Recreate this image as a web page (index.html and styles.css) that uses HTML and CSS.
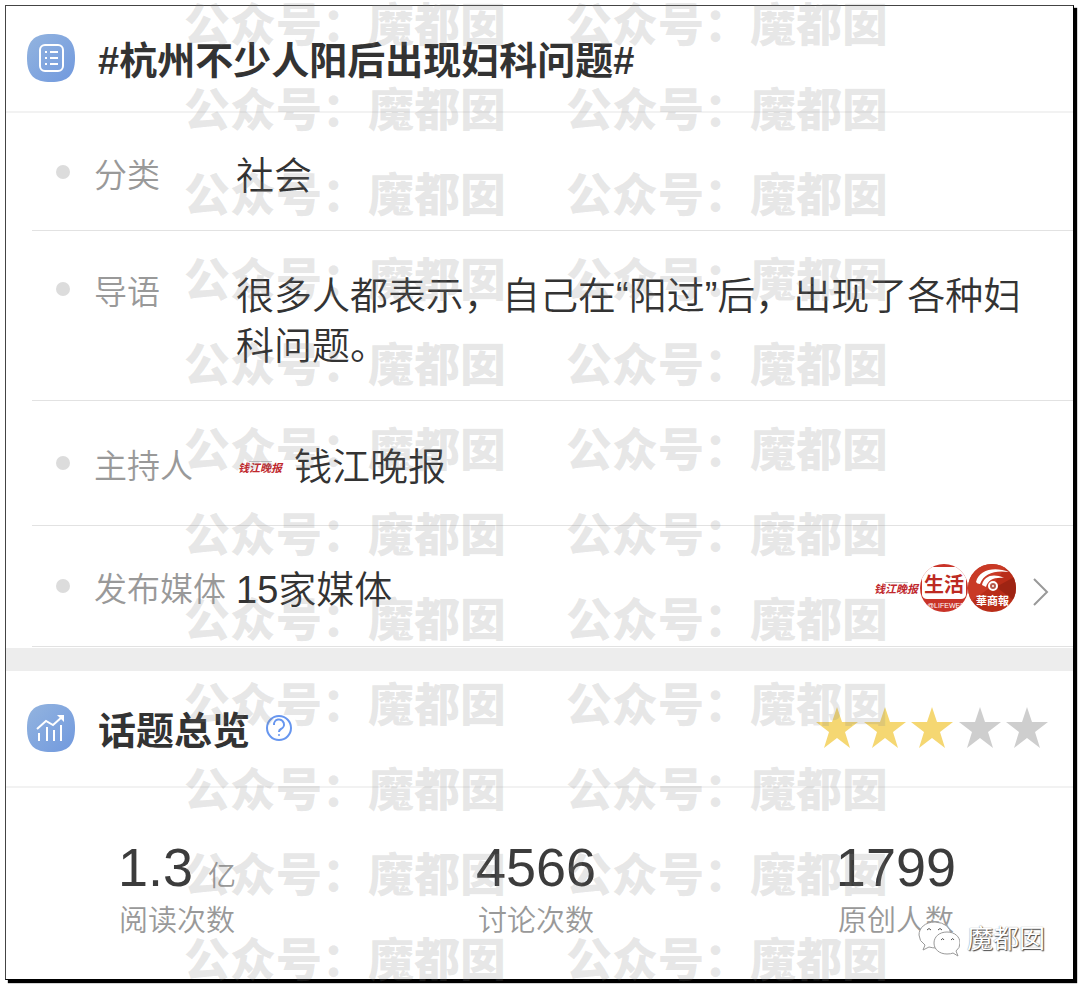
FILE: index.html
```html
<!DOCTYPE html>
<html lang="zh-CN">
<head>
    <meta charset="utf-8">
    <meta name="viewport" content="width=device-width, initial-scale=1">
    <title>话题详情</title>
    <link rel="stylesheet" href="styles.css">
</head>
<body>
    <main class="card">
        <header class="card-header">
            <svg class="header-icon" viewBox="0 0 48 48" aria-hidden="true">
                <defs>
                    <linearGradient id="blue" x1="0" y1="0" x2="1" y2="1">
                        <stop offset="0" stop-color="#93b4df"/>
                        <stop offset="1" stop-color="#7199de"/>
                    </linearGradient>
                </defs>
                <path fill="url(#blue)" d="M24 0C41 0 48 7 48 24S41 48 24 48 0 41 0 24 7 0 24 0Z"/>
                <rect x="13" y="11" width="23" height="26" rx="5" fill="none" stroke="#fff" stroke-width="2"/>
                <path stroke="#fff" stroke-width="2" d="M18 18h2m3 0h8M18 24h2m3 0h8M18 30h2m3 0h8"/>
            </svg>
            <h1>#杭州不少人阳后出现妇科问题#</h1>
        </header>

        <dl class="info">
            <div class="row">
                <dt>分类</dt>
                <dd>社会</dd>
            </div>
            <div class="row row-intro">
                <dt>导语</dt>
                <dd>很多人都表示，自己在“阳过”后，出现了各种妇科问题。</dd>
            </div>
            <div class="row row-host">
                <dt>主持人</dt>
                <dd>
                    <svg class="paper-logo" viewBox="0 0 48 48" aria-hidden="true">
                        <path stroke="#c4c4c4" d="M13 18.500h23"/>
                        <text x="2" y="29">钱江晚报</text>
                    </svg>
                    钱江晚报
                </dd>
            </div>
            <div class="row row-media">
                <dt>发布媒体</dt>
                <dd>15家媒体</dd>
                <dd class="media-list">
                    <a href="#media" aria-label="查看全部媒体">
                        <svg class="paper-logo" viewBox="0 0 48 48" aria-hidden="true">
                            <path stroke="#c4c4c4" d="M13 18.500h23"/>
                            <text x="2" y="29">钱江晚报</text>
                        </svg>
                        <svg class="avatar" viewBox="0 0 48 48" aria-hidden="true">
                            <clipPath id="round"><circle cx="24" cy="24" r="24"/></clipPath>
                            <g clip-path="url(#round)">
                                <path fill="#c93328" d="M0 0h48v48H0z"/>
                                <path fill="#fff" d="M2 6Q3 3 7 3h34q4 0 5 3v25q-1 4-5 4H7q-4 0-5-4Z"/>
                                <text class="life-name" x="4" y="28">生活</text>
                                <text class="life-web" x="7" y="44">@LIFEWEEK</text>
                            </g>
                        </svg>
                        <svg class="avatar" viewBox="0 0 48 48" aria-hidden="true">
                            <g clip-path="url(#round)">
                                <path fill="#b92d19" d="M0 0h48v48H0z"/>
                                <path fill="#c93a26" d="M0 0h40L24 22 0 40Z"/>
                                <path fill="#9e2413" d="M28 23 48 12v26Z"/>
                                <path fill="#fff" d="M8 18C11 6 26 2 41 8 27 6 16 9 12 20Q9 20 8 18Z"/>
                                <path fill="#fff" d="M14 21C16 12 25 9 36 14 26 13 20 16 18 23Z"/>
                                <circle cx="25" cy="22" r="4" fill="#b55b4e" stroke="#fff" stroke-width="2"/>
                                <circle cx="25" cy="22" r="1" fill="#fff"/>
                                <text class="huashang" x="8" y="41">華商報</text>
                            </g>
                        </svg>
                        <svg class="chevron" viewBox="0 0 16 28" aria-hidden="true">
                            <path fill="none" stroke="#999" stroke-width="2" d="M1 1l13 13L1 27"/>
                        </svg>
                    </a>
                </dd>
            </div>
        </dl>

        <section class="overview">
            <header class="card-header overview-header">
                <svg class="header-icon" viewBox="0 0 48 48" aria-hidden="true">
                    <path fill="url(#blue)" d="M24 0C41 0 48 7 48 24S41 48 24 48 0 41 0 24 7 0 24 0Z"/>
                    <path fill="none" stroke="#fff" stroke-width="2" d="M12 37v-8M20 37V23M27 37V26M34 37V21"/>
                    <path fill="none" stroke="#fff" stroke-width="2" d="M10 25l9-8 7 4 9-8"/>
                    <path fill="#fff" d="M30 11h7v7Z"/>
                </svg>
                <h2>话题总览</h2>
                <button type="button" class="help" aria-label="说明">
                    <svg viewBox="0 0 26 26" aria-hidden="true">
                        <circle cx="13" cy="13" r="12" fill="none" stroke="#6796ef" stroke-width="2"/>
                        <path fill="none" stroke="#6796ef" stroke-width="2" d="M8 10a5 5 0 1 1 7 4q-2 1-2 3"/>
                        <circle cx="13" cy="20" r="1" fill="#6796ef"/>
                    </svg>
                </button>
                <svg class="stars" viewBox="0 0 234 44" role="img" aria-label="三星，满分五星">
                    <defs>
                        <path id="star" d="M22 1l5 15h16L30 26l5 16-13-10L9 42l5-16L1 16h16Z"/>
                    </defs>
                    <g fill="#f5d772">
                        <use href="#star"/>
                        <use href="#star" x="48"/>
                        <use href="#star" x="95"/>
                    </g>
                    <g fill="#cecece">
                        <use href="#star" x="143"/>
                        <use href="#star" x="190"/>
                    </g>
                </svg>
            </header>
            <ul class="stats">
                <li><strong>1.3 <small>亿</small></strong><span>阅读次数</span></li>
                <li><strong>4566</strong><span>讨论次数</span></li>
                <li><strong>1799</strong><span>原创人数</span></li>
            </ul>
        </section>

        <div class="account">
            <svg viewBox="0 0 42 38" aria-hidden="true">
                <g fill="#fff" stroke="#999">
                    <path d="M17 2C7 2 1 8 1 15q0 6 6 10l-2 5 6-3q4 1 7 1 15-1 15-13Q32 3 17 2Z"/>
                    <path d="M29 12c-8 0-13 5-13 11s5 11 13 11q4 0 6-1l5 3-2-5q4-3 4-8c0-6-5-11-13-11Z"/>
                </g>
                <path fill="none" stroke="#555" d="M9 10q2-3 4 0m7 0q2-3 4 0M23 20q2-3 3 0m7 0q2-3 3 0"/>
            </svg>
            <span>魔都囡</span>
        </div>
    </main>

    <!-- 水印 -->
    <div class="watermark" aria-hidden="true">
        <span>公众号：魔都囡</span><span>公众号：魔都囡</span>
        <span>公众号：魔都囡</span><span>公众号：魔都囡</span>
        <span>公众号：魔都囡</span><span>公众号：魔都囡</span>
        <span>公众号：魔都囡</span><span>公众号：魔都囡</span>
        <span>公众号：魔都囡</span><span>公众号：魔都囡</span>
        <span>公众号：魔都囡</span><span>公众号：魔都囡</span>
        <span>公众号：魔都囡</span><span>公众号：魔都囡</span>
        <span>公众号：魔都囡</span><span>公众号：魔都囡</span>
        <span>公众号：魔都囡</span><span>公众号：魔都囡</span>
        <span>公众号：魔都囡</span><span>公众号：魔都囡</span>
        <span>公众号：魔都囡</span><span>公众号：魔都囡</span>
        <span>公众号：魔都囡</span><span>公众号：魔都囡</span>
    </div>
</body>
</html>
```
FILE: styles.css
```css
* {
    box-sizing: border-box;
}
body {
    position: relative;
    margin: 0;
    padding: 5px 6px 6px 5px;
    background-color: #fff;
    color: #333;
    font-family: "Liberation Sans", "Noto Sans CJK SC", sans-serif;
}
h1, h2, dl, dd, ul {
    margin: 0;
    padding: 0;
}
svg {
    display: block;
    flex: none;
}
.card {
    position: relative;
    border: 1px solid;
    border-color: #444 #000 #000 #444;
    box-shadow: 3px 3px 1px #000;
}

/* headers */
.card-header {
    display: flex;
    align-items: center;
    height: 107px;
    padding: 0 24px 1px 21px;
    border-bottom: 2px solid #f2f2f2;
}
.header-icon {
    width: 48px;
    height: 48px;
    margin-right: 23px;
}
h1, h2 {
    padding-top: 5px;
    font-size: 38px;
    line-height: 50px;
    font-weight: bold;
}

/* info rows */
.row {
    display: grid;
    grid-template-columns: 62px 142px 1fr auto;
    margin-left: 26px;
    padding: 38px 0 29px;
    border-bottom: 1px solid #e2e2e2;
}
.row::before {
    content: "";
    width: 14px;
    height: 14px;
    margin: 14px 0 0 24px;
    border-radius: 50%;
    background-color: #dcdcdc;
}
dt {
    color: #999;
    font-size: 33px;
    line-height: 50px;
    font-weight: 350;
    white-space: nowrap;
}
dd {
    font-size: 38px;
    line-height: 50px;
    font-weight: 350;
}
.row-intro {
    padding: 37px 0 29px;
}
.row-intro dd {
    padding: 3px 44px 0 0;
}
.row-host {
    padding: 41px 0 33px;
}
.row-host dd {
    display: flex;
    align-items: center;
    gap: 10px;
}
.row-media {
    padding: 39px 0 31px;
}
.media-list a {
    display: flex;
    align-items: center;
    height: 46px;
    padding-right: 24px;
}
.paper-logo,
.avatar {
    width: 48px;
    height: 48px;
}
.paper-logo text {
    fill: #c0282d;
    font-family: "Noto Sans CJK SC", sans-serif;
    font-size: 11px;
    font-style: italic;
    font-weight: bold;
}
.life-name {
    fill: #bd2a22;
    font-size: 20px;
    font-weight: bold;
}
.life-web {
    fill: #fff;
    font-size: 7px;
}
.huashang {
    fill: #fff;
    font-size: 11px;
    font-weight: bold;
}
.chevron {
    width: 16px;
    height: 28px;
    margin: 8px 0 0 17px;
}

/* overview */
.overview {
    border-top: 23px solid #ededed;
    margin-top: 1px;
}
.overview-header {
    height: 117px;
}
.help {
    margin-left: 16px;
    padding: 0;
    border: 0;
    background: none;
    cursor: pointer;
}
.help svg {
    width: 26px;
    height: 26px;
}
.stars {
    width: 234px;
    height: 44px;
    margin-left: auto;
}
.stats {
    display: flex;
    justify-content: space-between;
    padding: 47px 117px 38px 112px;
    list-style: none;
    text-align: center;
}
.stats strong {
    display: block;
    height: 66px;
    font-size: 54px;
    line-height: 64px;
    font-weight: normal;
    color: #3c3c3c;
}
.stats small {
    font-size: 28px;
    line-height: 28px;
    font-weight: 350;
    color: #999;
}
.stats span {
    display: block;
    font-size: 29px;
    line-height: 40px;
    font-weight: 350;
    color: #999;
}

.account {
    position: absolute;
    right: 28px;
    bottom: 20px;
    display: flex;
    align-items: center;
    gap: 7px;
    color: #fff;
    font-size: 26px;
    line-height: 40px;
    text-shadow: 1px 1px 1px #444, 0 0 1px #777;
}
.account svg {
    width: 42px;
    height: 38px;
}

/* watermark lies over the whole card */
.watermark {
    position: absolute;
    inset: 0;
    display: grid;
    grid-template-columns: max-content max-content;
    grid-auto-rows: 85px;
    column-gap: 60px;
    justify-content: center;
    padding-right: 8px;
    overflow: hidden;
    color: rgba(130, 130, 130, 0.19);
    font-family: "Noto Sans CJK SC", sans-serif;
    font-size: 46px;
    font-weight: 900;
    line-height: 42px;
    pointer-events: none;
}
```
